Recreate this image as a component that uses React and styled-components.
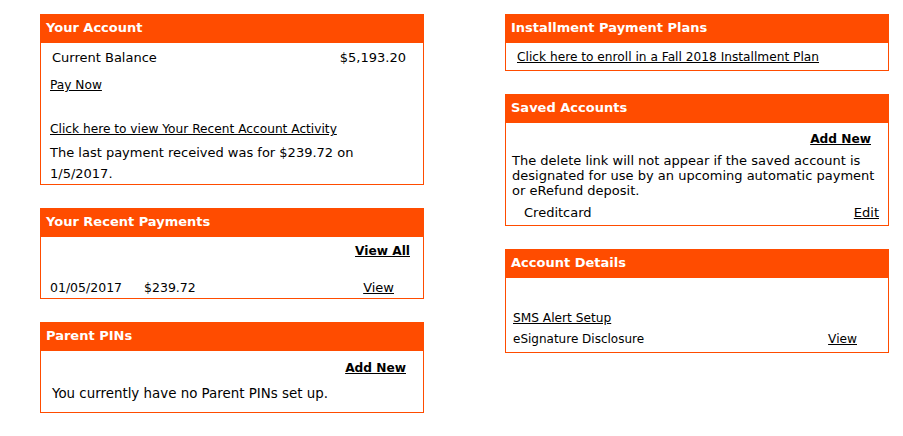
import React from 'react';
import styled, { createGlobalStyle } from 'styled-components';

const ORANGE = '#ff4c00';

const GlobalStyle = createGlobalStyle`
  body {
    margin: 0;
    background: #fff;
    font-family: "DejaVu Sans", Verdana, sans-serif;
    font-size: 13px;
    color: #000;
  }
`;

const Page = styled.div`
  display: grid;
  grid-template-columns: 384px 384px;
  column-gap: 81px;
  padding: 14px 0 0 40px;
  align-items: start;
`;

const Column = styled.div`
  display: flex;
  flex-direction: column;
  gap: 23px;
`;

const Panel = styled.section`
  border: 1px solid ${ORANGE};
  border-top: none;
  padding-bottom: ${({ $pb }) => $pb || 0}px;
`;

const PanelHeader = styled.h2`
  margin: 0 -1px;
  height: 29px;
  line-height: 28px;
  padding: 0 6px;
  background: ${ORANGE};
  color: #fff;
  font-size: 13px;
  font-weight: bold;
`;

const Row = styled.div`
  display: flex;
  justify-content: ${({ $end }) => ($end ? 'flex-end' : 'space-between')};
  align-items: center;
  line-height: 16px;
  margin-top: ${({ $mt }) => $mt || 0}px;
  padding: 0 ${({ $pr }) => $pr || 0}px 0 ${({ $pl }) => $pl || 0}px;
`;

const Link = styled.a`
  color: #000;
  text-decoration: underline;
  cursor: pointer;
  font-size: ${({ $size }) => $size || 12.2}px;
  font-weight: ${({ $bold }) => ($bold ? 'bold' : 'normal')};
`;

const Label = styled.span`
  font-size: ${({ $size }) => $size || 13}px;
`;

const Text = styled.p`
  margin: ${({ $mt }) => $mt || 0}px 0 0;
  padding: 0 ${({ $pr }) => $pr || 0}px 0 ${({ $pl }) => $pl || 0}px;
  font-size: ${({ $size }) => $size || 13}px;
  line-height: ${({ $lh }) => $lh || 16}px;
`;

const Cells = styled.div`
  display: flex;
  gap: ${({ $gap }) => $gap || 0}px;
`;

const App = () => (
  <>
    <GlobalStyle />
    <Page>
      <Column>
        <Panel $pb={0}>
          <PanelHeader>Your Account</PanelHeader>
          <Row $mt={7} $pl={11} $pr={17}>
            <Label>Current Balance</Label>
            <Label>$5,193.20</Label>
          </Row>
          <Row $mt={11} $pl={9}>
            <Link>Pay Now</Link>
          </Row>
          <Row $mt={28} $pl={9}>
            <Link>Click here to view Your Recent Account Activity</Link>
          </Row>
          <Text $mt={5} $lh={21} $pl={9} $pr={60}>
            The last payment received was for $239.72 on 1/5/2017.
          </Text>
        </Panel>

        <Panel $pb={2}>
          <PanelHeader>Your Recent Payments</PanelHeader>
          <Row $mt={6} $pr={13} $end>
            <Link $bold>View All</Link>
          </Row>
          <Row $mt={21} $pl={9} $pr={29}>
            <Cells $gap={22}>
              <Label $size={12.5}>01/05/2017</Label>
              <Label $size={12.5}>$239.72</Label>
            </Cells>
            <Link $size={13}>View</Link>
          </Row>
        </Panel>

        <Panel $pb={10}>
          <PanelHeader>Parent PINs</PanelHeader>
          <Row $mt={9} $pr={17} $end>
            <Link $bold>Add New</Link>
          </Row>
          <Text $mt={10} $pl={11} $size={13.4}>
            You currently have no Parent PINs set up.
          </Text>
        </Panel>
      </Column>

      <Column>
        <Panel $pb={5}>
          <PanelHeader>Installment Payment Plans</PanelHeader>
          <Row $mt={6} $pl={11}>
            <Link>Click here to enroll in a Fall 2018 Installment Plan</Link>
          </Row>
        </Panel>

        <Panel $pb={4}>
          <PanelHeader>Saved Accounts</PanelHeader>
          <Row $mt={8} $pr={17} $end>
            <Link $bold>Add New</Link>
          </Row>
          <Text $mt={6} $lh={15} $pl={6} $pr={6}>
            The delete link will not appear if the saved account is designated for use by an upcoming automatic payment or eRefund deposit.
          </Text>
          <Row $mt={7} $pl={18} $pr={9}>
            <Label>Creditcard</Label>
            <Link $size={13}>Edit</Link>
          </Row>
        </Panel>

        <Panel $pb={5}>
          <PanelHeader>Account Details</PanelHeader>
          <Row $mt={32} $pl={7}>
            <Link>SMS Alert Setup</Link>
          </Row>
          <Row $mt={5} $pl={7} $pr={31}>
            <Label $size={12}>eSignature Disclosure</Label>
            <Link>View</Link>
          </Row>
        </Panel>
      </Column>
    </Page>
  </>
);

export default App;
